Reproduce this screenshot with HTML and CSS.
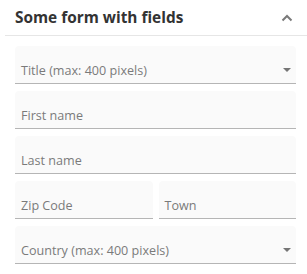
FILE: index.html
```
<!DOCTYPE html>
<html>
<head>
<meta charset="utf-8">
<link rel="stylesheet" href="styles.css">
</head>
<body>
<div class="panel">
  <div class="header">
    <span class="title">Some form with fields</span>
    <svg class="chev" width="12" height="8" viewBox="0 0 12 8"><polyline points="1.5,6.5 6,2 10.5,6.5" fill="none" stroke="#7a7a7a" stroke-width="2"/></svg>
  </div>
  <div class="form">
    <div class="field select"><span class="ph">Title (max: 400 pixels)</span><span class="tri"></span></div>
    <div class="field"><span class="ph">First name</span></div>
    <div class="field"><span class="ph">Last name</span></div>
    <div class="row">
      <div class="field"><span class="ph">Zip Code</span></div>
      <div class="field"><span class="ph">Town</span></div>
    </div>
    <div class="field select"><span class="ph">Country (max: 400 pixels)</span><span class="tri"></span></div>
  </div>
</div>
</body>
</html>
```
FILE: styles.css
```
html, body { margin: 0; padding: 0; background: #fff; }
body { font-family: "Open Sans", "Noto Sans", sans-serif; }
.panel { padding-left: 5px; width: 302px; }
.header {
  height: 36px;
  border-bottom: 1px solid #e6e6e6;
  display: flex;
  align-items: center;
  justify-content: space-between;
  padding: 0 10px 0 10px;
  box-sizing: border-box;
}
.title { font-weight: 700; font-size: 15.4px; color: #333; }
.chev { margin-right: 4px; }
.form {
  padding: 10px 11px 0 10px;
  display: flex;
  flex-direction: column;
  gap: 7px;
}
.field {
  height: 38px;
  box-sizing: border-box;
  background: #fafafa;
  border-radius: 4px 4px 0 0;
  border-bottom: 1px solid #b5b5b5;
  display: flex;
  align-items: flex-end;
  justify-content: space-between;
  padding: 0 5px 3px 6px;
}
.ph { font-size: 12.6px; color: #7a7a7a; line-height: 18px; }
.tri {
  width: 0; height: 0;
  border-left: 4px solid transparent;
  border-right: 4px solid transparent;
  border-top: 4px solid #757575;
  margin-bottom: 8px;
}
.row { display: grid; grid-template-columns: 1fr 1fr; gap: 6px; }
```
